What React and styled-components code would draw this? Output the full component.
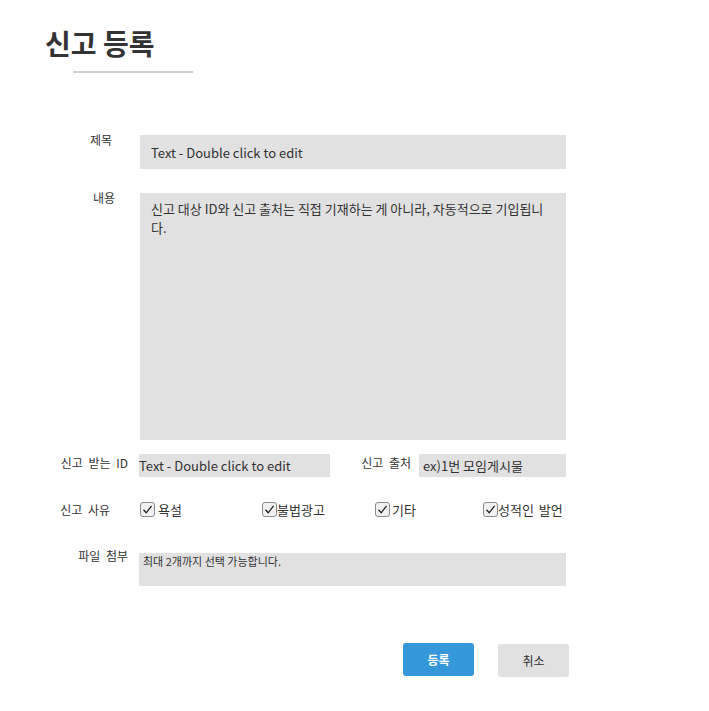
import React from 'react';
import styled, { createGlobalStyle } from 'styled-components';

const GlobalStyle = createGlobalStyle`
body {
    margin: 0;
    background: #fff;
    font-family: "Noto Sans CJK KR", "Noto Sans", sans-serif;
    color: #333;
}
`

const Page = styled.div`
width: 709px;
min-height: 711px;
`

const Header = styled.div`
padding: 23px 0 0 45px;
`

const Title = styled.h1`
margin: 0;
font-size: 28px;
font-weight: 700;
line-height: 40px;
color: #333;
`

const Underline = styled.div`
width: 120px;
height: 2px;
margin: 8px 0 0 28px;
background: #cfcfcf;
`

const Form = styled.div`
padding-top: 62px;
`

const Row = styled.div`
display: flex;
align-items: ${p => p.$align || 'flex-start'};
margin-top: ${p => p.$top || 0}px;
`

const Label = styled.div`
flex: none;
width: ${p => p.$w}px;
margin-right: ${p => p.$gap}px;
margin-top: ${p => p.$dy || 0}px;
text-align: right;
font-size: 12px;
line-height: 12px;
word-spacing: 3px;
color: #333;
white-space: nowrap;
`

const Field = styled.div`
flex: none;
box-sizing: border-box;
width: ${p => p.$w}px;
height: ${p => p.$h}px;
padding: ${p => p.$pad || '0'};
background: #e1e1e1;
font-size: ${p => p.$size || 13}px;
line-height: ${p => p.$lh || 19}px;
color: #333;
display: ${p => (p.$center ? 'flex' : 'block')};
align-items: center;
`

const Checks = styled.div`
display: flex;
align-items: center;
`

const CheckItem = styled.label`
display: flex;
align-items: center;
width: ${p => (p.$w ? `${p.$w}px` : 'auto')};
font-size: 13px;
line-height: 15px;
word-spacing: 2px;
color: #333;
gap: ${p => p.$gap}px;
`

const Box = styled.span`
box-sizing: border-box;
width: 15px;
height: 15px;
border: 1px solid #8a8a8a;
border-radius: 3px;
background: #f1f1f1;
display: flex;
align-items: center;
justify-content: center;
`

const Buttons = styled.div`
display: flex;
gap: 24px;
padding-left: 403px;
margin-top: 57px;
`

const Button = styled.button`
width: 71px;
height: 33px;
border: none;
border-radius: 3px;
background: ${p => (p.$primary ? '#3498db' : '#e1e1e1')};
color: ${p => (p.$primary ? '#fff' : '#333')};
font-family: inherit;
font-size: 12px;
font-weight: ${p => (p.$primary ? 700 : 400)};
margin-top: ${p => (p.$primary ? 0 : 1)}px;
`

const Check = ({ w, gap, children }) => (
    <CheckItem $w={w} $gap={gap}>
        <Box>
            <svg width="11" height="11" viewBox="0 0 11 11">
                <path d="M1.5 5.8 L4.2 8.8 L9.6 1.8" fill="none" stroke="#222" strokeWidth="1.3" />
            </svg>
        </Box>
        {children}
    </CheckItem>
)

const App = () => {
    return (
        <Page>
            <GlobalStyle />
            <Header>
                <Title>신고 등록</Title>
                <Underline />
            </Header>
            <Form>
                <Row>
                    <Label $w={112} $gap={28} $dy={-1}>제목</Label>
                    <Field $w={426} $h={34} $pad="0 11px" $center>Text - Double click to edit</Field>
                </Row>
                <Row $top={24}>
                    <Label $w={115} $gap={25} $dy={-1}>내용</Label>
                    <Field $w={426} $h={247} $pad="6px 14px 0 11px">
                        신고 대상 ID와 신고 출처는 직접 기재하는 게 아니라, 자동적으로 기입됩니다.
                    </Field>
                </Row>
                <Row $top={14}>
                    <Label $w={128} $gap={11} $dy={3}>신고 받는 ID</Label>
                    <Field $w={191} $h={23} $center>Text - Double click to edit</Field>
                    <Label $w={81} $gap={8} $dy={3}>신고 출처</Label>
                    <Field $w={147} $h={23} $pad="0 4px" $center>ex)1번 모임게시물</Field>
                </Row>
                <Row $top={25} $align="center">
                    <Label $w={110} $gap={30}>신고 사유</Label>
                    <Checks>
                        <Check w={122} gap={3}>욕설</Check>
                        <Check w={113} gap={0}>불법광고</Check>
                        <Check w={108} gap={2}>기타</Check>
                        <Check gap={0}>성적인 발언</Check>
                    </Checks>
                </Row>
                <Row $top={36}>
                    <Label $w={128} $gap={11} $dy={-3}>파일 첨부</Label>
                    <Field $w={427} $h={33} $pad="1px 4px" $size={11} $lh={14}>최대 2개까지 선택 가능합니다.</Field>
                </Row>
            </Form>
            <Buttons>
                <Button $primary>등록</Button>
                <Button>취소</Button>
            </Buttons>
        </Page>
    )
}

export default App;
